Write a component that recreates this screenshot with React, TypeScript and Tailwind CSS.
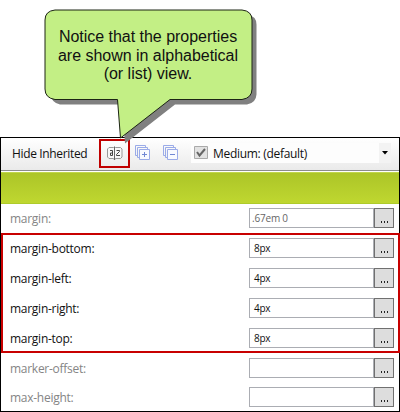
type Property = { name: string; value: string; muted?: boolean };

const inheritedTop: Property[] = [{ name: 'margin:', value: '.67em 0', muted: true }];
const margins: Property[] = [
  { name: 'margin-bottom:', value: '8px' },
  { name: 'margin-left:', value: '4px' },
  { name: 'margin-right:', value: '4px' },
  { name: 'margin-top:', value: '8px' },
];
const inheritedBottom: Property[] = [
  { name: 'marker-offset:', value: '', muted: true },
  { name: 'max-height:', value: '', muted: true },
];

function Row({ item, height }: { item: Property; height: string }) {
  return (
    <div className={`flex items-start ${height}`}>
      <span
        className={`w-[239px] pt-px text-[12px] leading-5 tracking-[-0.27px] ${
          item.muted ? 'text-[#858585]' : 'text-[#111]'
        }`}
      >
        {item.name}
      </span>
      <div
        className={`h-5 w-[125px] border border-[#abadb3] bg-white text-[10px] leading-[18px] ${
          item.muted ? 'pl-[2px] tracking-[-0.2px] text-[#666]' : 'pl-1 tracking-[-0.3px] text-[#111]'
        }`}
      >
        {item.value}
      </div>
      <div className="flex h-5 w-5 items-end justify-center gap-[2px] border border-[#707070] bg-[#dddddd] pb-[4px]">
        <i className="h-[2px] w-px bg-[#222]" />
        <i className="h-[2px] w-px bg-[#222]" />
        <i className="h-[2px] w-px bg-[#222]" />
      </div>
    </div>
  );
}

function AlphaIcon() {
  return (
    <svg width="16" height="16" viewBox="0 0 16 16" fill="none">
      <path d="M6.500 1.500H2L.5 3v8L2 12.500h4.500l1 1.500 1-1.500H13.500L15 11V3l-1.500-1.500H8.500L7.500.5z" fill="#f8f8f8" stroke="#999" />
      <path d="M7.500 1v13" stroke="#666" />
      <path d="M3 4.500h2.500v5h-2v-2.500h2" stroke="#444" />
      <path d="M9.500 4.500h3v1l-3 3v1h3.500" stroke="#444" />
    </svg>
  );
}

function StackIcon({ plus }: { plus?: boolean }) {
  return (
    <svg width="16" height="16" viewBox="0 0 16 16" fill="none" stroke="#9aabe8">
      <path d="M2.500 10.500h-2v-10h10v2M4.500 12.500h-2v-10h10v2" />
      <path d="M4.500 4.500h10v10h-10z" fill="#f8faff" />
      <path d={plus ? 'M7 9.500h5M9.500 7v5' : 'M7 9.500h5'} stroke="#7088d4" />
    </svg>
  );
}

function Callout() {
  return (
    <svg className="absolute left-0 top-0" width="400" height="146" viewBox="0 0 400 146">
      <path
        d="M60 14.500H247Q256.500 16 256.500 24.500V94.500Q256 103 247 104.500H175L125 143.500L122 104.500H60Q52 103 50 94.500V24.500Z"
        fill="#808080"
      />
      <path
        d="M55 10H242Q252 11 252 20V89Q252 98 242 99.500H170L120.500 138L117.500 99.500H55Q45 98 45 89V20Q45 11 55 10Z"
        fill="#c3ef85"
        stroke="#1c2414"
      />
    </svg>
  );
}

export default function App() {
  return (
    <main className="relative h-[412px] w-[400px] overflow-hidden bg-white pt-[137px] font-['Open_Sans','Noto_Sans',sans-serif]">
      <section className="flex h-[275px] flex-col border border-black bg-white">
        <header className="flex h-[33px] shrink-0 items-start border-b border-[#8c8c8c] bg-gradient-to-b from-white to-[#eaeaea] text-[12px] text-[#111]">
          <span className="w-[87px] whitespace-nowrap pl-[11px] pt-[6px] leading-5 tracking-[-0.35px]">Hide Inherited</span>
          <div className="ml-[11px] mt-px flex h-[29px] w-[31px] items-center justify-center border-2 border-[#c00000] pl-px">
            <AlphaIcon />
          </div>
          <div className="ml-[5px] mt-[7px]"><StackIcon plus /></div>
          <div className="ml-3 mt-[7px]"><StackIcon /></div>
          <div className="ml-[12px] mt-[5px] flex h-[20px] flex-1 bg-[#fdfdfd]">
            <svg className="ml-[3px] mt-[3px] shrink-0" width="14" height="14" viewBox="0 0 14 14">
              <path d="M.5.5h13v12H.5z" fill="#e2e2e2" stroke="#aaa" />
              <path d="m3 6 2.500 3.500L11 3" fill="none" stroke="#666" strokeWidth="2" />
            </svg>
            <span className="ml-[5px] whitespace-nowrap pt-px leading-5 tracking-[-0.3px]">Medium: (default)</span>
          </div>
          <div className="mr-2 mt-[5px] h-[20px] w-[12px] bg-[#f3f3f3] pl-[3px] pt-2">
            <svg width="6" height="4" viewBox="0 0 6 4"><path d="M0 0h6L3 3.500z" fill="#000" /></svg>
          </div>
        </header>
        <div className="mt-px h-8 shrink-0 border-b border-t border-b-[#aecb2b] border-t-[#c1d64b] bg-gradient-to-b from-[#acc528] to-[#bfd730]" />
        <div className="pl-[9px] pt-1"><Row item={inheritedTop[0]} height="h-[25px]" /></div>
        <div className="-mr-px h-[120px] shrink-0 border-2 border-[#c80000] pl-[7px] pt-[3px]">
          {margins.map((item) => <Row key={item.name} item={item} height="h-[30px]" />)}
        </div>
        <div className="pl-[9px] pt-[5px]">
          {inheritedBottom.map((item) => <Row key={item.name} item={item} height="h-[29px]" />)}
        </div>
      </section>
      <Callout />
      <p className="absolute left-[45px] top-[28px] w-[206px] text-center font-['Liberation_Sans',Arial,sans-serif] text-[16px] leading-[18.500px] tracking-[-0.02px] text-[#111]">
        Notice that the properties
        <br />
        are shown in alphabetical
        <br />
        (or list) view.
      </p>
    </main>
  );
}
